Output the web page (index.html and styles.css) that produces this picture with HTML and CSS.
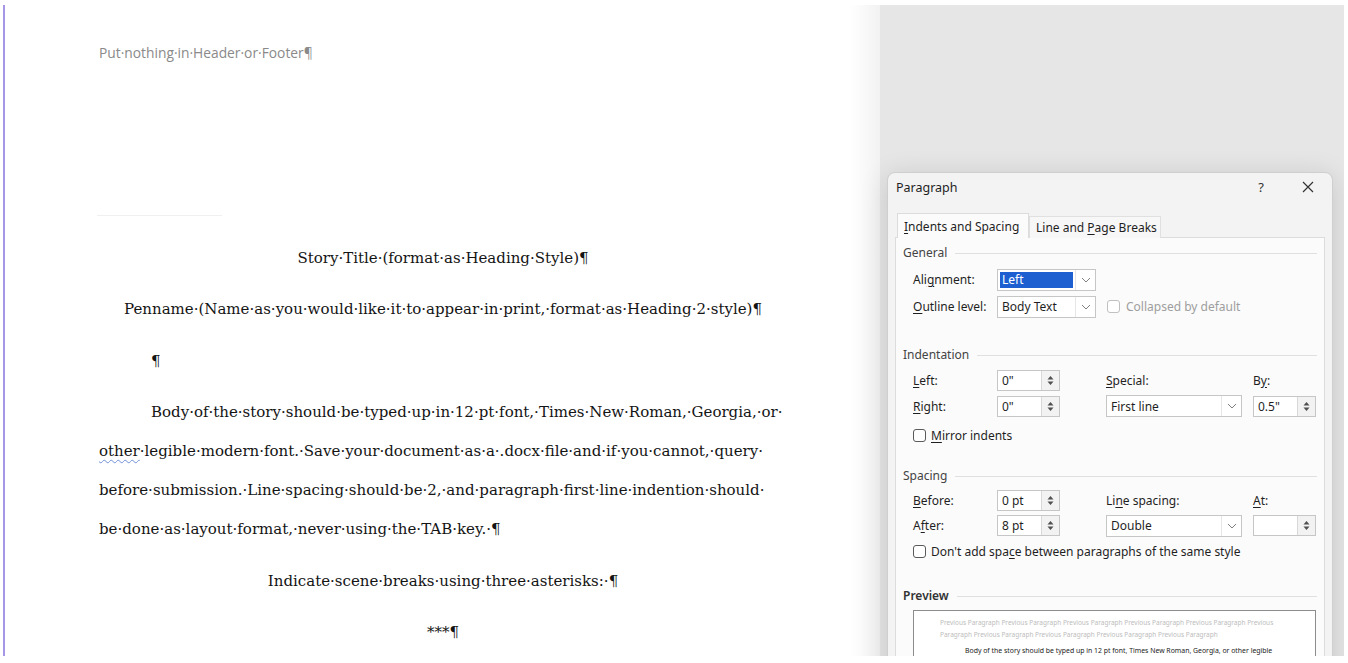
FILE: index.html
```html
<!DOCTYPE html>
<html>
<head>
    <meta charset="UTF-8">
    <title>Paragraph Settings</title>
    <link rel="stylesheet" href="styles.css">
</head>
<body>
    <div class="screen">
        <!-- Document page with formatting marks shown -->
        <div class="page">
            <div class="header-note">Put·nothing·in·Header·or·Footer¶</div>
            <div class="header-rule"></div>
            <p class="doc-center first-para">Story·Title·(format·as·Heading·Style)¶</p>
            <p class="doc-center">Penname·(Name·as·you·would·like·it·to·appear·in·print,·format·as·Heading·2·style)¶</p>
            <p class="doc-body">¶</p>
            <p class="doc-body">Body·of·the·story·should·be·typed·up·in·12·pt·font,·Times·New·Roman,·Georgia,·or·<br><span class="squiggle">other</span>·legible·modern·font.·Save·your·document·as·a·.docx·file·and·if·you·cannot,·query·<br>before·submission.·Line·spacing·should·be·2,·and·paragraph·first·line·indention·should·<br>be·done·as·layout·format,·never·using·the·TAB·key.·¶</p>
            <p class="doc-center">Indicate·scene·breaks·using·three·asterisks:·¶</p>
            <p class="doc-center">***¶</p>
        </div>

        <!-- Grey workspace with the Paragraph dialog -->
        <div class="side">
            <div class="dialog">
                <div class="dialog-title">
                    <span>Paragraph</span>
                    <div class="title-buttons">
                        <span class="help">?</span>
                        <svg width="12" height="12" viewBox="0 0 12 12"><path d="M1 1 L11 11 M11 1 L1 11" stroke="#333" stroke-width="1.2"/></svg>
                    </div>
                </div>

                <div class="tabs">
                    <div class="tab active"><span><u>I</u>ndents and Spacing</span></div>
                    <div class="tab"><span>Line and <u>P</u>age Breaks</span></div>
                </div>

                <div class="tab-panel">
                    <div class="group-title">General</div>
                    <div class="form-grid general-grid">
                        <span>Ali<u>g</u>nment:</span>
                        <div class="select w-99">
                            <span class="select-value highlight">Left</span>
                            <span class="select-arrow"><svg width="10" height="6" viewBox="0 0 10 6"><path d="M1 1 L5 5 L9 1" fill="none" stroke="#808080"/></svg></span>
                        </div>
                        <span></span>
                        <span><u>O</u>utline level:</span>
                        <div class="select w-99">
                            <span class="select-value">Body Text</span>
                            <span class="select-arrow"><svg width="10" height="6" viewBox="0 0 10 6"><path d="M1 1 L5 5 L9 1" fill="none" stroke="#808080"/></svg></span>
                        </div>
                        <label class="check-inline disabled"><span class="checkbox"></span><span>Collapsed by default</span></label>
                    </div>

                    <div class="group-title spaced">Indentation</div>
                    <div class="form-grid">
                        <span><u>L</u>eft:</span>
                        <div class="spin">
                            <span class="spin-value">0"</span>
                            <span class="spin-arrows"><svg width="7" height="11" viewBox="0 0 7 11"><path d="M3.5 1 L6.5 4.5 L0.5 4.5 Z M0.5 6.5 L6.5 6.5 L3.5 10 Z" fill="#505050"/></svg></span>
                        </div>
                        <span><u>S</u>pecial:</span>
                        <span>B<u>y</u>:</span>
                        <span><u>R</u>ight:</span>
                        <div class="spin">
                            <span class="spin-value">0"</span>
                            <span class="spin-arrows"><svg width="7" height="11" viewBox="0 0 7 11"><path d="M3.5 1 L6.5 4.5 L0.5 4.5 Z M0.5 6.5 L6.5 6.5 L3.5 10 Z" fill="#505050"/></svg></span>
                        </div>
                        <div class="select w-136">
                            <span class="select-value">First line</span>
                            <span class="select-arrow"><svg width="10" height="6" viewBox="0 0 10 6"><path d="M1 1 L5 5 L9 1" fill="none" stroke="#808080"/></svg></span>
                        </div>
                        <div class="spin">
                            <span class="spin-value">0.5"</span>
                            <span class="spin-arrows"><svg width="7" height="11" viewBox="0 0 7 11"><path d="M3.5 1 L6.5 4.5 L0.5 4.5 Z M0.5 6.5 L6.5 6.5 L3.5 10 Z" fill="#505050"/></svg></span>
                        </div>
                    </div>
                    <label class="check-row mirror-row"><span class="checkbox"></span><span><u>M</u>irror indents</span></label>

                    <div class="group-title spacing-title">Spacing</div>
                    <div class="form-grid spacing-grid">
                        <span><u>B</u>efore:</span>
                        <div class="spin">
                            <span class="spin-value">0 pt</span>
                            <span class="spin-arrows"><svg width="7" height="11" viewBox="0 0 7 11"><path d="M3.5 1 L6.5 4.5 L0.5 4.5 Z M0.5 6.5 L6.5 6.5 L3.5 10 Z" fill="#505050"/></svg></span>
                        </div>
                        <span>Li<u>n</u>e spacing:</span>
                        <span><u>A</u>t:</span>
                        <span>A<u>f</u>ter:</span>
                        <div class="spin">
                            <span class="spin-value">8 pt</span>
                            <span class="spin-arrows"><svg width="7" height="11" viewBox="0 0 7 11"><path d="M3.5 1 L6.5 4.5 L0.5 4.5 Z M0.5 6.5 L6.5 6.5 L3.5 10 Z" fill="#505050"/></svg></span>
                        </div>
                        <div class="select w-136">
                            <span class="select-value">Double</span>
                            <span class="select-arrow"><svg width="10" height="6" viewBox="0 0 10 6"><path d="M1 1 L5 5 L9 1" fill="none" stroke="#808080"/></svg></span>
                        </div>
                        <div class="spin">
                            <span class="spin-value"></span>
                            <span class="spin-arrows"><svg width="7" height="11" viewBox="0 0 7 11"><path d="M3.5 1 L6.5 4.5 L0.5 4.5 Z M0.5 6.5 L6.5 6.5 L3.5 10 Z" fill="#505050"/></svg></span>
                        </div>
                    </div>
                    <label class="check-row"><span class="checkbox"></span><span>Don't add spa<u>c</u>e between paragraphs of the same style</span></label>

                    <div class="group-title spaced preview-title">Preview</div>
                    <div class="preview-box">
                        <div class="preview-prev">Previous Paragraph Previous Paragraph Previous Paragraph Previous Paragraph Previous Paragraph Previous<br>Paragraph Previous Paragraph Previous Paragraph Previous Paragraph Previous Paragraph</div>
                        <div class="preview-body">Body of the story should be typed up in 12 pt font, Times New Roman, Georgia, or other legible</div>
                    </div>
                </div>
            </div>
        </div>
    </div>
</body>
</html>
```

FILE: styles.css
```css
body {
    margin: 0;
    background-color: #fff;
}
.screen {
    display: flex;
    height: 651px;
    margin: 5px 4px 0 3px;
    overflow: hidden;
}

/* document page */
.page {
    box-sizing: border-box;
    flex: none;
    width: 877px;
    padding: 39px 93px 0 94px;
    border-left: 2px solid #a795e6;
    background: linear-gradient(to right, #fff 845px, #f2f2f2 875px);
    color: #141414;
}
.header-note {
    font-family: "Open Sans", sans-serif;
    font-size: 13.8px;
    line-height: 18px;
    color: #8a8a8a;
}
.header-rule {
    width: 125px;
    height: 1px;
    margin: 153px 0 0 -2px;
    background-color: #f0f0f0;
}
.doc-center,
.doc-body {
    margin: 0 0 12.5px;
    font-family: "DejaVu Serif", serif;
    font-size: 15px;
    line-height: 39px;
    white-space: nowrap;
}
.doc-center {
    text-align: center;
}
.doc-body {
    text-indent: 52px;
}
.first-para {
    margin-top: 22.5px;
}
.squiggle {
    text-decoration: underline wavy #7090d8;
    text-decoration-thickness: 1px;
    text-underline-offset: 3px;
}

/* grey area + dialog */
.side {
    flex: 1;
    padding: 167px 0 0 7px;
    background-color: #e6e6e6;
}
.dialog {
    box-sizing: border-box;
    width: 446px;
    height: 540px;
    border: 1px solid #cfcfcf;
    border-radius: 8px;
    background-color: #f3f3f3;
    box-shadow: 0 4px 28px rgba(0, 0, 0, 0.14);
    font-family: "Noto Sans", sans-serif;
    font-size: 12px;
    color: #1f1f1f;
}
.dialog u {
    text-underline-offset: 2px;
}
.dialog-title {
    display: flex;
    justify-content: space-between;
    align-items: center;
    height: 28px;
    padding: 0 18px 0 8px;
    font-size: 12.5px;
}
.title-buttons {
    display: flex;
    align-items: center;
    gap: 38px;
}
.help {
    font-size: 13px;
    color: #333;
}
.tabs {
    display: flex;
    align-items: flex-end;
    margin: 12px 0 -1px 9px;
}
.tab {
    box-sizing: border-box;
    display: flex;
    align-items: center;
    width: 132px;
    height: 22px;
    padding: 0 6px;
    border: 1px solid #e0e0e0;
    border-bottom: none;
    background-color: #f7f7f7;
    white-space: nowrap;
}
.tab.active {
    position: relative;
    height: 25px;
    padding-left: 6px;
    border-color: #dcdcdc;
    background-color: #fbfbfb;
}
.tab-panel {
    height: 460px;
    margin: 0 7px;
    padding: 7px 7px 0;
    border: 1px solid #dcdcdc;
    background-color: #fbfbfb;
}
.group-title {
    display: flex;
    align-items: center;
    line-height: 16px;
    color: #444;
}
.group-title::after {
    content: "";
    flex: 1;
    height: 1px;
    margin-left: 8px;
    background-color: #e0e0e0;
}
.group-title.spaced {
    margin-top: 27px;
}
.spacing-title {
    margin-top: 23px;
}
.preview-title {
    font-weight: 600;
    color: #333;
}
.form-grid {
    display: grid;
    grid-template-columns: 84px 109px 147px 63px;
    grid-auto-rows: 26px;
    align-items: center;
    margin: 4px 0 0 10px;
}
.general-grid {
    grid-template-columns: 84px 110px auto;
    grid-auto-rows: 27px;
    margin-top: 5px;
}
.spacing-grid {
    grid-auto-rows: 25px;
}

.select {
    box-sizing: border-box;
    display: flex;
    height: 22px;
    border: 1px solid #c6c6c6;
    background-color: #fff;
}
.w-99 {
    width: 99px;
}
.w-136 {
    width: 136px;
}
.select-value {
    flex: 1;
    display: flex;
    align-items: center;
    padding-left: 4px;
}
.select-value.highlight {
    margin: 2px;
    padding-left: 2px;
    background-color: #1d5fd1;
    color: #fff;
}
.select-arrow {
    display: flex;
    align-items: center;
    justify-content: center;
    width: 19px;
    border-left: 1px solid #e6e6e6;
}

.spin {
    box-sizing: border-box;
    display: flex;
    width: 63px;
    height: 21px;
    border: 1px solid #c6c6c6;
    background-color: #fff;
}
.spin-value {
    flex: 1;
    display: flex;
    align-items: center;
    padding-left: 4px;
}
.spin-arrows {
    display: flex;
    align-items: center;
    justify-content: center;
    width: 17px;
    border-left: 1px solid #d8d8d8;
    background-color: #f2f2f2;
}

.checkbox {
    box-sizing: border-box;
    flex: none;
    width: 13px;
    height: 13px;
    border: 1px solid #5a5a5a;
    border-radius: 3px;
    background-color: #fff;
}
.check-inline {
    display: flex;
    align-items: center;
    gap: 6px;
}
.check-inline.disabled {
    color: #9e9e9e;
}
.check-inline.disabled .checkbox {
    border-color: #c0c0c0;
}
.check-row {
    display: flex;
    align-items: center;
    gap: 5px;
    height: 20px;
    margin: 3px 0 0 10px;
}
.mirror-row {
    margin-top: 6px;
}

.preview-box {
    box-sizing: border-box;
    width: 403px;
    height: 80px;
    margin: 6px 0 0 10px;
    padding: 6px 0 0 26px;
    border: 1px solid #8c8c8c;
    background-color: #fff;
    line-height: 12px;
    white-space: nowrap;
}
.preview-prev {
    font-size: 6.5px;
    color: #bdbdbd;
}
.preview-body {
    margin-top: 4px;
    text-indent: 25px;
    font-size: 6.9px;
    color: #222;
}
```
